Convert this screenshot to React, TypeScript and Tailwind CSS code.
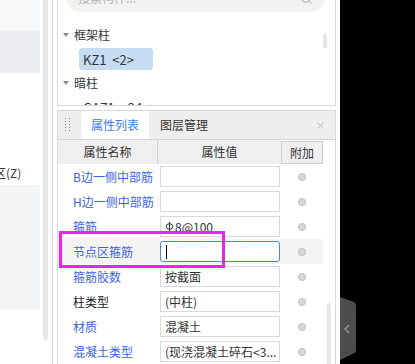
import { Search, X } from "lucide-react";

type Row = {
  name: string;
  value: string;
  blue: boolean;
  rebar?: boolean;
  active?: boolean;
};

const rows: Row[] = [
  { name: "B边一侧中部筋", value: "", blue: true },
  { name: "H边一侧中部筋", value: "", blue: true },
  { name: "箍筋", value: "8@100", blue: true, rebar: true },
  { name: "节点区箍筋", value: "", blue: true, active: true },
  { name: "箍筋胶数", value: "按截面", blue: true },
  { name: "柱类型", value: "(中柱)", blue: false },
  { name: "材质", value: "混凝土", blue: true },
  { name: "混凝土类型", value: "(现浇混凝土碎石<3...", blue: true },
];

// HRB400 钢筋符号
function RebarMark() {
  return (
    <svg width="9" height="12" viewBox="0 0 9 12" className="mr-[1px] shrink-0">
      <ellipse cx="4.5" cy="5.5" rx="3.3" ry="2.8" fill="none" stroke="#333" strokeWidth="1" />
      <line x1="4.5" y1="1" x2="4.5" y2="10.5" stroke="#333" strokeWidth="1" />
      <line x1="0.5" y1="10.5" x2="8.5" y2="10.5" stroke="#333" strokeWidth="1" />
    </svg>
  );
}

function Caret() {
  return (
    <span className="h-0 w-0 border-x-[3px] border-t-[4px] border-x-transparent border-t-[#8a8a8a]" />
  );
}

function TreeItem({ label }: { label: string }) {
  return (
    <div className="flex h-[24px] shrink-0 items-center gap-[5px] pl-[5px] text-[#333]">
      <Caret />
      <span className="leading-none">{label}</span>
    </div>
  );
}

export default function App() {
  return (
    <div className="relative flex h-[364px] w-[415px] overflow-hidden bg-black font-['Noto_Sans_CJK_SC','Liberation_Sans',sans-serif] text-[12px]">
      {/* 左侧面板 */}
      <div className="flex w-[53px] shrink-0 border-r border-[#dadada] bg-white">
        <div className="flex w-[40px] flex-col text-[#333]">
          <div className="h-[31px] bg-[#f7f8fa]" />
          <div className="h-[42px] bg-[#eceef2]" />
          <div className="h-[88px] bg-white" />
          <div className="flex h-[24px] items-center overflow-hidden bg-white">
            <span className="-ml-[6px] whitespace-nowrap leading-none">区(Z)</span>
          </div>
          <div className="h-[125px] bg-[#f4f5f7]" />
          <div className="flex-1 bg-white" />
        </div>
        <div className="w-[3px]" />
        <div className="h-[340px] w-[5px] rounded-b-[3px] bg-[#e8e8e8]" />
      </div>

      {/* 中间面板 */}
      <div className="flex h-[364px] w-[287px] shrink-0 flex-col overflow-hidden bg-white px-[4px]">
        {/* 构件树 */}
        <div className="flex h-[106px] shrink-0 flex-col overflow-hidden border-x border-b border-[#d9d9d9]">
          <div className="-mt-[16px] ml-[8px] flex h-[28px] w-[259px] shrink-0 items-center justify-between rounded-full bg-[#f2f2f2] px-[12px] text-[#b0b0b0]">
            <span className="leading-none">搜索构件...</span>
            <Search size={13} strokeWidth={1.5} color="#9a9a9a" />
          </div>
          <div className="mt-[11px] flex">
            <div className="flex flex-1 flex-col">
              <TreeItem label="框架柱" />
              <div className="flex h-[24px] shrink-0 items-center pl-[21px]">
                <div className="flex h-[22px] w-[74px] items-center rounded-[3px] bg-[#c6dcf3] pl-[4px] text-[13px] text-[#333]">
                  <span className="whitespace-pre leading-none">KZ1  &lt;2&gt;</span>
                </div>
              </div>
              <TreeItem label="暗柱" />
              <div className="flex h-[24px] shrink-0 items-center pl-[25px] text-[13px] text-[#333]">
                <span className="whitespace-pre leading-none">GAZ1  &lt;24&gt;</span>
              </div>
            </div>
            <div className="w-[12px] pt-[11px]">
              <div className="h-[14px] w-[4px] rounded-full bg-[#e5e5e5]" />
            </div>
          </div>
        </div>

        <div className="h-[4px] shrink-0" />

        {/* 属性面板 */}
        <div className="flex min-h-0 flex-1 flex-col overflow-hidden border-x border-t border-[#d9d9d9]">
          <div className="flex h-[28px] shrink-0 items-center bg-[#eeeeee]">
            <svg width="5" height="14" viewBox="0 0 5 14" className="ml-[7px]">
              {[1, 4, 7, 10, 13].map((y) => (
                <g key={y}>
                  <rect x="0" y={y - 1} width="1" height="1" fill="#888" />
                  <rect x="4" y={y - 1} width="1" height="1" fill="#888" />
                </g>
              ))}
            </svg>
            <div className="ml-[11px] flex h-full w-[68px] items-center bg-white px-[10px] text-[#3b7de6]">
              <span className="leading-none">属性列表</span>
            </div>
            <span className="ml-[11px] leading-none text-[#333]">图层管理</span>
            <div className="flex-1" />
            <X size={11} strokeWidth={1.3} color="#9a9a9a" className="mr-[9px]" />
          </div>

          <div className="flex h-[25px] shrink-0 border-t border-[#d4d4d4] text-[#333]">
            <div className="flex w-[100px] items-center justify-center border-r border-[#d4d4d4] bg-[#efefef]">
              <span className="leading-none">属性名称</span>
            </div>
            <div className="flex w-[123px] items-center justify-center bg-[#efefef]">
              <span className="leading-none">属性值</span>
            </div>
            <div className="mt-[1px] flex h-[23px] w-[42px] items-center justify-center border border-[#cfcfcf] bg-[#efefef]">
              <span className="leading-none">附加</span>
            </div>
          </div>

          <div className="flex">
            <div className="flex w-[265px] flex-col">
              {rows.map((row) => (
                <div
                  key={row.name}
                  className={`flex h-[25px] shrink-0 items-center ${row.active ? "bg-[#f4f4f4]" : ""}`}
                >
                  <div
                    className={`w-[100px] whitespace-nowrap pl-[15px] leading-none ${row.blue ? "text-[#3c64dc]" : "text-[#222]"}`}
                  >
                    {row.name}
                  </div>
                  <div className="w-[123px] pl-[2px]">
                    {row.active ? (
                      <div className="flex h-[21px] w-[120px] items-center rounded-[3px] border border-[#4a86e8] bg-white pl-[5px]">
                        <span className="h-[14px] w-[1px] bg-black" />
                      </div>
                    ) : (
                      <div className="flex h-[21px] w-[120px] items-center overflow-hidden border border-[#d9d9d9] bg-white px-[4px] text-[#333]">
                        {row.rebar && <RebarMark />}
                        <span className="whitespace-nowrap leading-none">{row.value}</span>
                      </div>
                    )}
                  </div>
                  <div className="flex w-[42px] justify-center">
                    <span className="h-[8px] w-[8px] rounded-full border border-[#bdbdbd] bg-[#d8d8d8]" />
                  </div>
                </div>
              ))}
            </div>
            <div className="w-[12px] pt-[139px]">
              <div className="ml-[4px] h-[61px] w-[4px] rounded-t-full bg-[#e6e6e6]" />
            </div>
          </div>
        </div>
      </div>

      {/* 右侧黑色区域 */}
      <div className="flex flex-1 flex-col pt-[297px]">
        <svg width="16" height="63" viewBox="0 0 16 63">
          <path d="M0 0 L13 4.5 Q16 5.5 16 8.5 L16 53 Q16 56 13 56.7 L0 63 Z" fill="#4d4d4d" />
          <polyline points="9,28 5,32 9,36" fill="none" stroke="#9a9a9a" strokeWidth="1.2" />
        </svg>
      </div>

      {/* 标注框 */}
      <div className="pointer-events-none absolute left-[59px] top-[231px] h-[37px] w-[166px] border-[3px] border-[#ee22ee]" />
    </div>
  );
}
